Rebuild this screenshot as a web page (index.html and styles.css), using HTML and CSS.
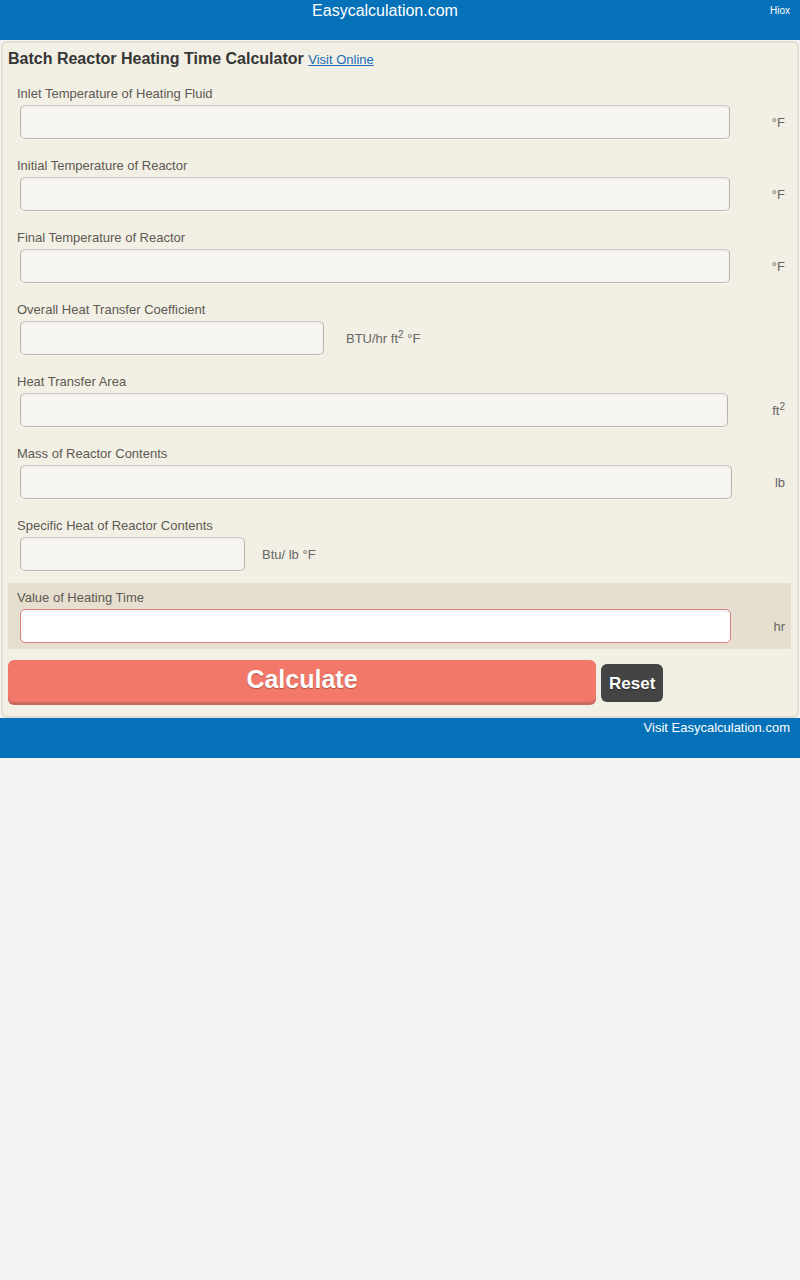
FILE: index.html
```html
<!DOCTYPE html>
<html>
<head>
<meta charset="utf-8">
<title>Batch Reactor Heating Time Calculator</title>
<link rel="stylesheet" href="styles.css">
</head>
<body>
<header class="topbar">
  <span class="spacer"></span>
  <span class="site">Easycalculation.com</span>
  <span class="hiox">Hiox</span>
</header>
<main class="card">
  <h1 class="title">Batch Reactor Heating Time Calculator <a href="#" class="visit">Visit Online</a></h1>

  <div class="row">
    <label class="lbl">Inlet Temperature of Heating Fluid</label>
    <div class="field"><input class="inp w710" type="text"><span class="unit right">°F</span></div>
  </div>
  <div class="row">
    <label class="lbl">Initial Temperature of Reactor</label>
    <div class="field"><input class="inp w710" type="text"><span class="unit right">°F</span></div>
  </div>
  <div class="row">
    <label class="lbl">Final Temperature of Reactor</label>
    <div class="field"><input class="inp w710" type="text"><span class="unit right">°F</span></div>
  </div>
  <div class="row">
    <label class="lbl">Overall Heat Transfer Coefficient</label>
    <div class="field"><input class="inp w304" type="text"><span class="unit gap22">BTU/hr ft<sup>2</sup> °F</span></div>
  </div>
  <div class="row">
    <label class="lbl">Heat Transfer Area</label>
    <div class="field"><input class="inp w708" type="text"><span class="unit right">ft<sup>2</sup></span></div>
  </div>
  <div class="row">
    <label class="lbl">Mass of Reactor Contents</label>
    <div class="field"><input class="inp w712" type="text"><span class="unit right">lb</span></div>
  </div>
  <div class="row">
    <label class="lbl">Specific Heat of Reactor Contents</label>
    <div class="field"><input class="inp w225" type="text"><span class="unit gap17">Btu/ lb °F</span></div>
  </div>
  <div class="row result">
    <label class="lbl">Value of Heating Time</label>
    <div class="field"><input class="inp out w711" type="text"><span class="unit right">hr</span></div>
  </div>

  <div class="actions">
    <button class="calc">Calculate</button>
    <button class="reset">Reset</button>
  </div>
</main>
<footer class="bottombar">
  <a href="#" class="foot">Visit Easycalculation.com</a>
</footer>
</body>
</html>
```

FILE: styles.css
```css
html, body {
  margin: 0;
  padding: 0;
}
body {
  background: #f3f2f4;
  font-family: "Liberation Sans", Arial, sans-serif;
  color: #555;
}
.topbar {
  height: 40px;
  background: #0571b8;
  display: grid;
  grid-template-columns: 1fr auto 1fr;
  align-items: start;
  padding-top: 2px;
  box-sizing: border-box;
}
.site {
  color: #fff;
  font-size: 16px;
  line-height: 18px;
  margin-right: 30px;
}
.hiox {
  justify-self: end;
  color: #fff;
  font-size: 10px;
  line-height: 18px;
  padding-right: 10px;
}
.card {
  display: block;
  margin: 1px 1px 0;
  background: #f2efe4;
  border: 2px solid #e2ddcf;
  border-radius: 6px;
  padding: 5px 6px 11px 5px;
}
.title {
  margin: 0 0 8px;
  font-size: 16px;
  line-height: 22px;
  font-weight: bold;
  color: #363636;
}
.visit {
  font-size: 13px;
  font-weight: normal;
  color: #1a6db9;
  text-decoration: underline;
}
.row {
  padding: 6px 0 6px 9px;
  margin-bottom: 6px;
}
.row.result {
  background: #e6dfcf;
  margin-bottom: 0;
}
.lbl {
  display: block;
  font-size: 13px;
  line-height: 16px;
  padding-top: 1px;
  color: #5e5953;
}
.field {
  display: flex;
  align-items: center;
  margin-top: 3px;
  padding-left: 3px;
}
.inp {
  box-sizing: border-box;
  height: 34px;
  border: 1px solid #bdb5ab;
  border-top-color: #d0cac2;
  border-radius: 5px;
  background: #f6f5f2;
  box-shadow: inset 0 1px 2px rgba(0,0,0,0.06), 0 1px 0 rgba(255,255,255,0.6);
  margin: 0;
  padding: 0 8px;
  font: 13px "Liberation Sans", Arial, sans-serif;
}
.inp.out {
  background: #fff;
  border: 1px solid #d98383;
  box-shadow: inset 0 1px 3px rgba(0,0,0,0.08);
}
.w710 { width: 710px; }
.w708 { width: 708px; }
.w712 { width: 712px; }
.w711 { width: 711px; }
.w304 { width: 304px; }
.w225 { width: 225px; }
.unit {
  font-size: 13px;
  color: #666;
}
.unit.right {
  margin-left: auto;
  padding-right: 6px;
}
.unit.gap22 { margin-left: 22px; }
.unit.gap17 { margin-left: 17px; }
.unit sup {
  font-size: 10px;
  line-height: 0;
}
.actions {
  display: flex;
  align-items: flex-start;
  gap: 5px;
  margin-top: 11px;
}
.calc {
  width: 588px;
  height: 42px;
  border: none;
  border-radius: 6px;
  background: #f27869;
  box-shadow: 0 3px 0 #c96a5e;
  color: #fff;
  font: bold 25px "Liberation Sans", Arial, sans-serif;
  text-shadow: 0 1px 1px rgba(0,0,0,0.3);
  padding: 0 0 4px;
  margin-bottom: 3px;
}
.reset {
  height: 38px;
  border: none;
  border-radius: 6px;
  background: #444444;
  color: #fff;
  font: bold 17px "Liberation Sans", Arial, sans-serif;
  text-shadow: 0 1px 1px rgba(0,0,0,0.4);
  padding: 2px 8px 0;
  margin-top: 4px;
}
.bottombar {
  height: 40px;
  margin-top: 0;
  background: #0571b8;
  display: flex;
  justify-content: flex-end;
  align-items: flex-start;
}
.foot {
  color: #fff;
  text-decoration: none;
  font-size: 13px;
  line-height: 20px;
  padding: 0 10px 0 0;
}
```
